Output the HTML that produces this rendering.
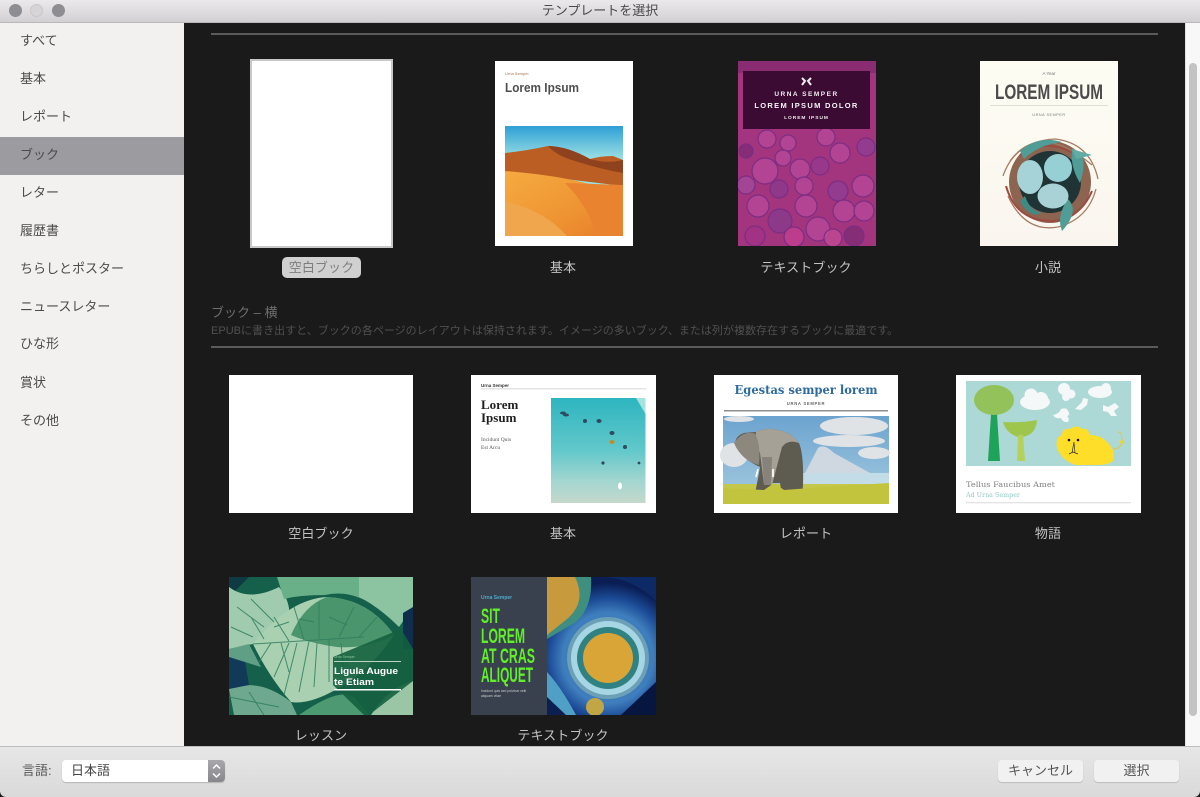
<!DOCTYPE html>
<html lang="ja">
<head>
<meta charset="utf-8">
<title>テンプレートを選択</title>
<style>
html,body{margin:0;padding:0;width:1200px;height:797px;overflow:hidden;background:#1a1a1a}
*{box-sizing:border-box}
body{font-family:"Liberation Sans","Noto Sans CJK JP",sans-serif;position:relative}
.a{position:absolute}
#title{left:0;top:0;width:1200px;height:23px;background:linear-gradient(#ebe9eb,#d2d0d2);border-bottom:1px solid #b9b9b9;text-align:center;font-size:13px;line-height:22px;color:#4a4a4a}
.tl{width:13px;height:13px;border-radius:50%;top:4px;background:#8d8d92}
#side{left:0;top:23px;width:184px;height:723px;background:#f3f1f0}
.si{position:absolute;left:20px;font-size:13px;line-height:18px;color:#4c4a4a;white-space:nowrap;filter:blur(.25px)}
#sel{left:0;top:137px;width:184px;height:38px;background:#9b9ba0}
#sb{left:1185px;top:23px;width:15px;height:723px;background:#f8f8f8;border-left:1px solid #e2e2e2}
#th{left:1189px;top:63px;width:8px;height:653px;border-radius:4px;background:#c3c3c3}
.lab{position:absolute;font-size:13px;line-height:18px;color:#c4c4c4;text-align:center;white-space:nowrap;letter-spacing:.1px;filter:blur(.25px)}
.hr{position:absolute;left:211px;width:947px;height:2px;background:#5a5a5a}
#bot{left:0;top:746px;width:1200px;height:51px;background:linear-gradient(#e6e6e6,#dadada);border-top:1px solid #bdbdbd;border-radius:0 0 6px 6px}
.btn{position:absolute;top:760px;height:22px;width:85px;background:#f1f1f1;border-radius:4px;box-shadow:0 1px 1px #bcbcbc;font-size:13px;line-height:22px;text-align:center;color:#555;filter:blur(.2px)}
svg{position:absolute;display:block;overflow:hidden}
svg.t{filter:blur(.35px)}
svg text{font-family:"Liberation Sans","Noto Sans CJK JP",sans-serif}
.serif{font-family:"Liberation Serif",serif !important}
.dj{font-family:"DejaVu Serif","Liberation Serif",serif !important}
</style>
</head>
<body>
<div class="a" id="side"></div>
<div class="a" id="sel"></div>
<div class="si" style="top:32px">すべて</div>
<div class="si" style="top:70px">基本</div>
<div class="si" style="top:108px">レポート</div>
<div class="si" style="top:146px">ブック</div>
<div class="si" style="top:184px">レター</div>
<div class="si" style="top:222px">履歴書</div>
<div class="si" style="top:260px">ちらしとポスター</div>
<div class="si" style="top:298px">ニュースレター</div>
<div class="si" style="top:335px">ひな形</div>
<div class="si" style="top:374px">賞状</div>
<div class="si" style="top:412px">その他</div>

<div class="a" id="title">テンプレートを選択</div>
<div class="a tl" style="left:9px"></div>
<div class="a tl" style="left:30px;background:#d6d4d6;border:1px solid #c9c7c9"></div>
<div class="a tl" style="left:52px"></div>

<div class="a" id="sb"></div>
<div class="a" id="th"></div>

<div class="hr" style="top:33px"></div>

<!-- blank portrait -->
<div class="a" style="left:250px;top:59px;width:143px;height:189px;background:#fff;border:2px solid #c8c8c8"></div>
<div class="a" style="left:282px;top:257px;width:79px;height:21px;border-radius:5px;background:#d0d0d0;color:#7d7d7d;font-size:13px;line-height:21px;text-align:center;letter-spacing:.1px">空白ブック</div>

<!-- basic portrait -->
<svg class="t" style="left:495px;top:61px" width="138" height="185" viewBox="0 0 138 185">
<defs>
<linearGradient id="sky" x1="0" y1="0" x2="0" y2="1"><stop offset="0" stop-color="#2f9fd6"/><stop offset=".3" stop-color="#9be0e2"/></linearGradient>
<linearGradient id="sand" x1="0" y1="0" x2="1" y2="1"><stop offset="0" stop-color="#f6ab40"/><stop offset=".6" stop-color="#ee9432"/><stop offset="1" stop-color="#e87c2a"/></linearGradient>
</defs>
<rect width="138" height="185" fill="#fff"/>
<text x="10" y="14" font-size="4" fill="#b0714e">Urna Semper</text>
<text x="10" y="31" font-size="13" font-weight="700" fill="#4e4e50" textLength="74" lengthAdjust="spacingAndGlyphs">Lorem Ipsum</text>
<rect x="10" y="65" width="118" height="110" fill="url(#sky)"/>
<path d="M10 92Q30 90 53 85Q70 85 95 98Q105 95 118 95L128 99V125Q70 118 10 111Z" fill="#bb5e24"/>
<path d="M53 85Q62 95 80 100Q105 108 128 112V99Q112 103 95 98Q72 85 53 85Z" fill="#8e421d"/>
<path d="M10 110Q60 114 90 122Q110 126 128 124V175H10Z" fill="url(#sand)"/>
<path d="M10 140Q50 150 72 175H10Z" fill="#f0a64c"/>
<path d="M70 122Q96 148 100 175H128V124Z" fill="#e98330"/>
</svg>

<!-- textbook portrait -->
<svg class="t" style="left:738px;top:61px" width="138" height="185" viewBox="0 0 138 185">
<rect width="138" height="185" fill="#a3357f"/>
<rect width="138" height="12" fill="#8a2c72"/>
<g fill="#b6499a" stroke="#7c2d82" stroke-width="1.200" fill-opacity=".8">
<circle cx="29" cy="78" r="9"/><circle cx="50" cy="82" r="8"/><circle cx="88" cy="76" r="9"/><circle cx="8" cy="90" r="7" fill="#7d2c74"/><circle cx="128" cy="86" r="9" fill="#8e3d92"/><circle cx="27" cy="110" r="13"/><circle cx="62" cy="108" r="10"/><circle cx="102" cy="92" r="10"/><circle cx="45" cy="97" r="8"/>
<circle cx="82" cy="105" r="9" fill="#933a8f"/><circle cx="41" cy="128" r="9" fill="#8a3a8d"/><circle cx="8" cy="124" r="9" fill="#a04a9a"/><circle cx="66" cy="125" r="9"/><circle cx="100" cy="130" r="10" fill="#8e3d92"/><circle cx="125" cy="125" r="11"/><circle cx="68" cy="145" r="11"/><circle cx="106" cy="150" r="11"/><circle cx="126" cy="150" r="10"/><circle cx="20" cy="145" r="11"/><circle cx="42" cy="160" r="12" fill="#863b8d"/><circle cx="80" cy="168" r="12"/><circle cx="116" cy="175" r="10" fill="#7d2c74"/><circle cx="95" cy="177" r="9" fill="#c04a94"/><circle cx="17" cy="175" r="10" fill="#a13285"/><circle cx="56" cy="176" r="10" fill="#c0408f"/>
</g>
<rect x="5" y="10" width="127" height="58" fill="#3b0b34"/>
<path d="M64 17l3 3-3 4M73 17l-3 3 3 4" stroke="#eee" stroke-width="2" fill="none"/>
<text x="68.500" y="35" font-size="6.500" font-weight="700" fill="#eee" text-anchor="middle" letter-spacing="1.500">URNA SEMPER</text>
<text x="68.500" y="47" font-size="7.500" font-weight="700" fill="#f5f5f5" text-anchor="middle" letter-spacing="1.300">LOREM IPSUM DOLOR</text>
<text x="68.500" y="58" font-size="4.800" font-weight="700" fill="#eee" text-anchor="middle" letter-spacing="1">LOREM IPSUM</text>
</svg>

<!-- novel -->
<svg class="t" style="left:980px;top:61px" width="138" height="185" viewBox="0 0 138 185">
<defs><linearGradient id="nov" x1="0" y1="0" x2="0" y2="1"><stop offset="0" stop-color="#fdfdf3"/><stop offset="1" stop-color="#faf5ef"/></linearGradient></defs>
<rect width="138" height="185" fill="url(#nov)"/>
<text x="69" y="14" font-size="4.500" fill="#777" text-anchor="middle">A Year</text>
<text x="69" y="38" font-size="21" font-weight="700" fill="#4b4b4b" text-anchor="middle" textLength="108" lengthAdjust="spacingAndGlyphs">LOREM IPSUM</text>
<rect x="10" y="44" width="118" height="1" fill="#dfdfd8"/>
<text x="69" y="55" font-size="3.800" fill="#777" text-anchor="middle" letter-spacing=".5">URNA SEMPER</text>
<circle cx="70" cy="121" r="41" fill="#8c6450"/>
<circle cx="70" cy="121" r="31" fill="#203436"/>
<g fill="none" stroke="#a87c64" stroke-width="1.300">
<path d="M23 115Q35 80 75 78Q110 82 118 118"/>
<path d="M28 135Q45 172 78 166Q108 158 116 128"/>
<path d="M30 100Q60 60 112 104"/>
</g>
<g fill="none" stroke="#9c4a40" stroke-width="2">
<path d="M26 125Q36 160 72 160Q100 158 112 130"/>
<path d="M40 94Q70 74 102 98"/>
</g>
<path d="M40 90Q58 74 82 81Q58 84 44 98Z" fill="#4f9d96"/>
<path d="M92 88Q110 92 100 122Q90 106 92 88Z" fill="#4f9d96"/>
<path d="M92 88L112 94 96 98Z" fill="#62aca6"/>
<path d="M88 138Q100 150 82 170Q76 155 88 138Z" fill="#4f9d96"/>
<path d="M45 135Q50 150 62 152Q50 158 40 140Z" fill="#3e8b86"/>
<ellipse cx="50" cy="116" rx="13" ry="17" fill="#a5d3d8"/>
<ellipse cx="78" cy="107" rx="14" ry="14" fill="#96cfd4"/>
<ellipse cx="73" cy="135" rx="15.500" ry="12.500" fill="#a8d2d5"/>
</svg>

<div class="lab" style="left:523px;top:259px;width:80px">基本</div>
<div class="lab" style="left:746px;top:259px;width:120px">テキストブック</div>
<div class="lab" style="left:1008px;top:259px;width:80px">小説</div>

<!-- section -->
<div class="a" style="left:211px;top:304px;font-size:13px;line-height:18px;color:#6e6e6e">ブック – 横</div>
<div class="a" style="left:211px;top:323px;font-size:11px;line-height:16px;color:#505050;white-space:nowrap;letter-spacing:.02px">EPUBに書き出すと、ブックの各ページのレイアウトは保持されます。イメージの多いブック、または列が複数存在するブックに最適です。</div>
<div class="hr" style="top:346px"></div>

<!-- row 2 -->
<div class="a" style="left:229px;top:375px;width:184px;height:138px;background:#fff"></div>

<svg class="t" style="left:471px;top:375px" width="185" height="138" viewBox="0 0 185 138">
<defs>
<linearGradient id="sea" x1="0" y1="0" x2="0" y2="1"><stop offset="0" stop-color="#2db5bf"/><stop offset=".5" stop-color="#62c8cb"/><stop offset=".8" stop-color="#a5d6d0"/><stop offset="1" stop-color="#c4d8cc"/></linearGradient>
</defs>
<rect width="185" height="138" fill="#fff"/>
<text x="10" y="12" font-size="4.500" font-weight="700" fill="#333">Urna Semper</text>
<rect x="10" y="13" width="165" height="1.500" fill="#e3e3e3"/>
<text class="serif" x="10" y="34" font-size="13" font-weight="700" fill="#1f1f1f">Lorem</text>
<text class="serif" x="10" y="47" font-size="13" font-weight="700" fill="#1f1f1f">Ipsum</text>
<text class="serif" x="10" y="66" font-size="5.500" fill="#555">Incidunt Quis</text>
<text class="serif" x="10" y="74" font-size="5.500" fill="#555">Est Arcu</text>
<rect x="80" y="23" width="94.500" height="105" fill="url(#sea)"/>
<path d="M165 23h9.500v16Z" fill="#a5e2e0"/>
<g fill="#2d4a60">
<ellipse cx="92" cy="38" rx="3" ry="1.500"/><ellipse cx="95" cy="40" rx="3" ry="1.500"/><circle cx="114" cy="46" r="2"/><ellipse cx="128" cy="46" rx="2.500" ry="2"/><ellipse cx="141" cy="58" rx="2.500" ry="2"/><ellipse cx="141" cy="67" rx="2.500" ry="2" fill="#c68a22"/><circle cx="154" cy="72" r="2"/><circle cx="132" cy="88" r="1.600"/><circle cx="168" cy="88" r="1.400"/>
</g>
<ellipse cx="149" cy="111" rx="2" ry="3.500" fill="#fff"/>
</svg>

<svg class="t" style="left:714px;top:375px" width="184" height="138" viewBox="0 0 184 138">
<defs>
<linearGradient id="ski" x1="0" y1="0" x2="0" y2="1"><stop offset="0" stop-color="#6ba3cf"/><stop offset="1" stop-color="#a7cce0"/></linearGradient>
</defs>
<rect width="184" height="138" fill="#fff"/>
<text class="dj" x="92" y="19" font-size="12.500" font-weight="700" fill="#2d6a9f" text-anchor="middle" textLength="143" lengthAdjust="spacingAndGlyphs">Egestas semper lorem</text>
<text x="92" y="30" font-size="4.200" font-weight="700" fill="#666" text-anchor="middle" letter-spacing=".7">URNA SEMPER</text>
<rect x="10" y="35" width="164" height="1.500" fill="#8f8f8f"/>
<rect x="9" y="41" width="166" height="88" fill="url(#ski)"/>
<g fill="#dfe3e6">
<ellipse cx="140" cy="51" rx="34" ry="9"/><ellipse cx="135" cy="66" rx="36" ry="6"/><ellipse cx="160" cy="78" rx="16" ry="6"/><ellipse cx="20" cy="80" rx="14" ry="12"/><ellipse cx="25" cy="44" rx="15" ry="3"/>
</g>
<path d="M90 100L104 73Q110 68 120 78L156 98Z" fill="#cfd8e0"/>
<rect x="85" y="98" width="90" height="14" fill="#c2dde8"/>
<rect x="9" y="109" width="166" height="20" fill="#c4c84a"/>
<path d="M42 57Q53 52 63 55Q76 56 85 68Q90 80 89 110L88 122H68L66 108H58L54 122H40Q44 105 46 92Q30 85 22 72Q19 62 30 58Q38 57 42 57Z" fill="#5e5b50"/>
<path d="M42 57Q53 52 63 55Q76 56 85 68Q74 64 68 72L58 110H50L46 78Q40 66 42 57Z" fill="#a6a196"/>
<path d="M20 68Q28 56 40 58Q47 66 45 90Q28 86 20 68Z" fill="#8c887e"/>
<path d="M48 82h10l-1 28h-7Z" fill="#87837a"/>
<path d="M44 94l-2 8M59 94l0 8" stroke="#fff" stroke-width="1.700"/>
<path d="M9 113L50 115L60 108L70 115L110 112L175 108V129H9Z" fill="#c2c43e"/>
</svg>

<svg class="t" style="left:956px;top:375px" width="185" height="138" viewBox="0 0 185 138">
<rect width="185" height="138" fill="#fff"/>
<rect x="10" y="6" width="165" height="85" fill="#acd8d6"/>
<path d="M35 39h6l3 47H32Z" fill="#1fa35a"/>
<ellipse cx="38" cy="25" rx="20" ry="15" fill="#93c25a"/>
<path d="M47 47Q66 48 81 45Q80 60 66 62H62Q50 58 47 47Z" fill="#9ec64d"/>
<path d="M62 60h5l2 26h-8Z" fill="#b4d25a"/>
<g fill="#f5f8f8">
<ellipse cx="79" cy="27" rx="15" ry="8"/><circle cx="75" cy="20" r="6.500"/><circle cx="85" cy="24" r="7"/>
<circle cx="108" cy="14" r="6"/><circle cx="115" cy="19" r="4.500"/><circle cx="110" cy="22" r="4"/>
<ellipse cx="144" cy="17" rx="12" ry="6"/><circle cx="150" cy="13" r="5"/>
<path d="M119 34l7-7 1-4 5 1-1 6-6 5Z"/>
<path d="M147 30l5 2 7-4 4 4-5 4 3 5-6 0-3-4-5-1Z"/>
<path d="M97 40q6-1 8-6q6-2 7 2q3 4-1 5q3 3 1 6q-5 1-7-4q-6 1-8-3Z"/>
</g>
<path d="M101 73Q99 62 106 60Q106 53 114 54Q120 49 126 54Q132 52 134 60Q145 60 152 68Q160 76 157 86Q152 90 142 90H120Q106 86 101 73Z" fill="#fede29"/>
<path d="M157 74q9 0 9-10q0-7-4-7" stroke="#e1c749" fill="none"/>
<circle cx="166" cy="67" r="2" fill="#e8d43a"/>
<circle cx="113" cy="65" r="1.300" fill="#111"/><circle cx="122" cy="65" r="1.300" fill="#111"/>
<path d="M118 67l-2 11M118 67l1 11M113 79l4-2 5 2" stroke="#333" stroke-width=".7" fill="none"/>
<text class="dj" x="10" y="112" font-size="7.500" fill="#808080" textLength="89" lengthAdjust="spacingAndGlyphs">Tellus Faucibus Amet</text>
<text class="dj" x="10" y="122" font-size="6" fill="#8fc7c4" textLength="54" lengthAdjust="spacingAndGlyphs">Ad Urna Semper</text>
<rect x="10" y="127" width="165" height="1.300" fill="#e2e2e2"/>
</svg>

<div class="lab" style="left:261px;top:525px;width:120px">空白ブック</div>
<div class="lab" style="left:523px;top:525px;width:80px">基本</div>
<div class="lab" style="left:766px;top:525px;width:80px">レポート</div>
<div class="lab" style="left:1008px;top:525px;width:80px">物語</div>

<!-- row 3 -->
<svg class="t" style="left:229px;top:577px" width="184" height="138" viewBox="0 0 184 138">
<rect width="184" height="138" fill="#14604a"/>
<path d="M0 0h20L0 20Z" fill="#0f3a44"/>
<path d="M0 10Q20 25 50 10Q62 25 60 40Q40 60 24 67L0 72Z" fill="#a0cbae"/>
<path d="M48 0H184V40L166 45Q130 10 96 18Q70 18 55 22Z" fill="#69b088"/>
<path d="M130 0H184V30L170 50Q150 30 130 20Z" fill="#8cc3a0"/>
<path d="M24 67Q60 22 98 20Q140 22 165 58Q140 95 108 112Q80 128 62 125Q40 100 24 67Z" fill="#a9d0b0"/>
<path d="M62 58Q75 28 98 20Q140 22 165 58Q140 72 108 70Q80 66 62 58Z" fill="#4a956c"/>
<path d="M0 112Q30 100 62 125L68 138H5Z" fill="#6ea88f"/>
<path d="M70 138Q110 110 125 120L140 138Z" fill="#4d9a72"/>
<path d="M142 138Q160 110 184 104V138Z" fill="#9ac6a6"/>
<path d="M174 36L184 30V72H174Z" fill="#0f2d4d"/>
<path d="M0 80L15 78 20 108 0 112Z" fill="#103a57"/>
<path d="M0 72L20 67 32 90 0 80Z" fill="#5f9f85"/>
<g stroke="#2f7e60" stroke-width="1" fill="none" opacity=".85">
<path d="M24 67L135 60M60 64L45 40M75 63L65 30M90 62L90 25M110 60L125 30M60 66L45 100M80 64L70 115M100 62L100 105M8 30L35 50M22 22L45 45M2 50L24 60M35 62L22 40M0 120L50 130M20 115L35 138"/>
<path d="M42 66L30 85M52 66L60 95M68 66L55 118M88 66L85 110M112 66L115 100M45 50L60 45M70 42L85 45M100 40L118 48M130 60L148 40"/>
</g>
<path d="M104 80L172 52L184 72V104L140 138H135L104 108Z" fill="#14603f" opacity=".9"/>
<text x="105" y="81" font-size="3.500" fill="#8fc59c">Urna Semper</text>
<rect x="105" y="84" width="67" height="1" fill="#bcd5c7"/>
<text x="105" y="97" font-size="9" font-weight="700" fill="#fff" textLength="64" lengthAdjust="spacingAndGlyphs">Ligula Augue</text>
<text x="105" y="108" font-size="9" font-weight="700" fill="#fff" textLength="40" lengthAdjust="spacingAndGlyphs">te Etiam</text>
<rect x="105" y="112" width="67" height="1.500" fill="#fff"/>
</svg>

<svg class="t" style="left:471px;top:577px" width="185" height="138" viewBox="0 0 185 138">
<defs>
<radialGradient id="cell" gradientUnits="userSpaceOnUse" cx="137" cy="81" r="75"><stop offset="0" stop-color="#2a60a6"/><stop offset=".6" stop-color="#3f7fbe"/><stop offset=".8" stop-color="#1b4a95"/><stop offset="1" stop-color="#0a1e55"/></radialGradient>
</defs>
<rect width="76" height="138" fill="#39404e"/>
<text x="10" y="22" font-size="5" font-weight="700" fill="#4fa9c9">Urna Semper</text>
<g fill="#62ef2a" font-weight="700" font-size="21">
<text x="10" y="46" textLength="19" lengthAdjust="spacingAndGlyphs">SIT</text>
<text x="10" y="66" textLength="44" lengthAdjust="spacingAndGlyphs">LOREM</text>
<text x="10" y="86" textLength="54" lengthAdjust="spacingAndGlyphs">AT CRAS</text>
<text x="10" y="105" textLength="52" lengthAdjust="spacingAndGlyphs">ALIQUET</text>
</g>
<text x="10" y="115" font-size="3.400" fill="#c9c9c9">Incidunt quis sed pulvinar velit</text>
<text x="10" y="120" font-size="3.400" fill="#c9c9c9">aliquam vitae</text>
<rect x="76" width="109" height="138" fill="url(#cell)"/>
<path d="M76 95Q90 110 105 138H76Z" fill="#4f9fc6"/>
<path d="M76 120L95 138H76Z" fill="#0b2050"/>
<path d="M150 138L185 105V138Z" fill="#071640"/>
<path d="M76 0H120Q122 30 105 45L76 62Z" fill="#3f8f80"/>
<path d="M76 0H104Q116 25 96 42L76 58Z" fill="#c79a3e"/>
<path d="M130 0H185V24Q160 0 130 0Z" fill="#0d2a66"/>
<circle cx="137" cy="81" r="41" fill="#6ca0b6"/>
<circle cx="137" cy="81" r="37" fill="#a6d5e4"/>
<circle cx="137" cy="81" r="31" fill="#2f8182"/>
<circle cx="137" cy="81" r="25" fill="#d8a536"/>
<circle cx="124" cy="130" r="9" fill="#c2a544"/>
</svg>

<div class="lab" style="left:261px;top:727px;width:120px">レッスン</div>
<div class="lab" style="left:503px;top:727px;width:120px">テキストブック</div>

<!-- bottom bar -->
<div class="a" id="bot"></div>
<div class="a" style="left:22px;top:762px;font-size:13px;line-height:18px;color:#555">言語:</div>
<div class="a" style="left:62px;top:760px;width:163px;height:22px;background:#fff;border-radius:4px;box-shadow:0 1px 1px #b5b5b5;font-size:13px;line-height:22px;color:#444;padding-left:9px">日本語</div>
<div class="a" style="left:208px;top:760px;width:17px;height:22px;background:linear-gradient(#a8a8ac,#87878b);border-radius:0 4px 4px 0"></div>
<svg style="left:208px;top:760px" width="17" height="22" viewBox="0 0 17 22"><path d="M5 8.500l3.500-3.500 3.500 3.500M5 13.500l3.500 3.500 3.500-3.500" stroke="#fff" stroke-width="1.500" fill="none"/></svg>
<div class="btn" style="left:998px">キャンセル</div>
<div class="btn" style="left:1094px">選択</div>
</body>
</html>
